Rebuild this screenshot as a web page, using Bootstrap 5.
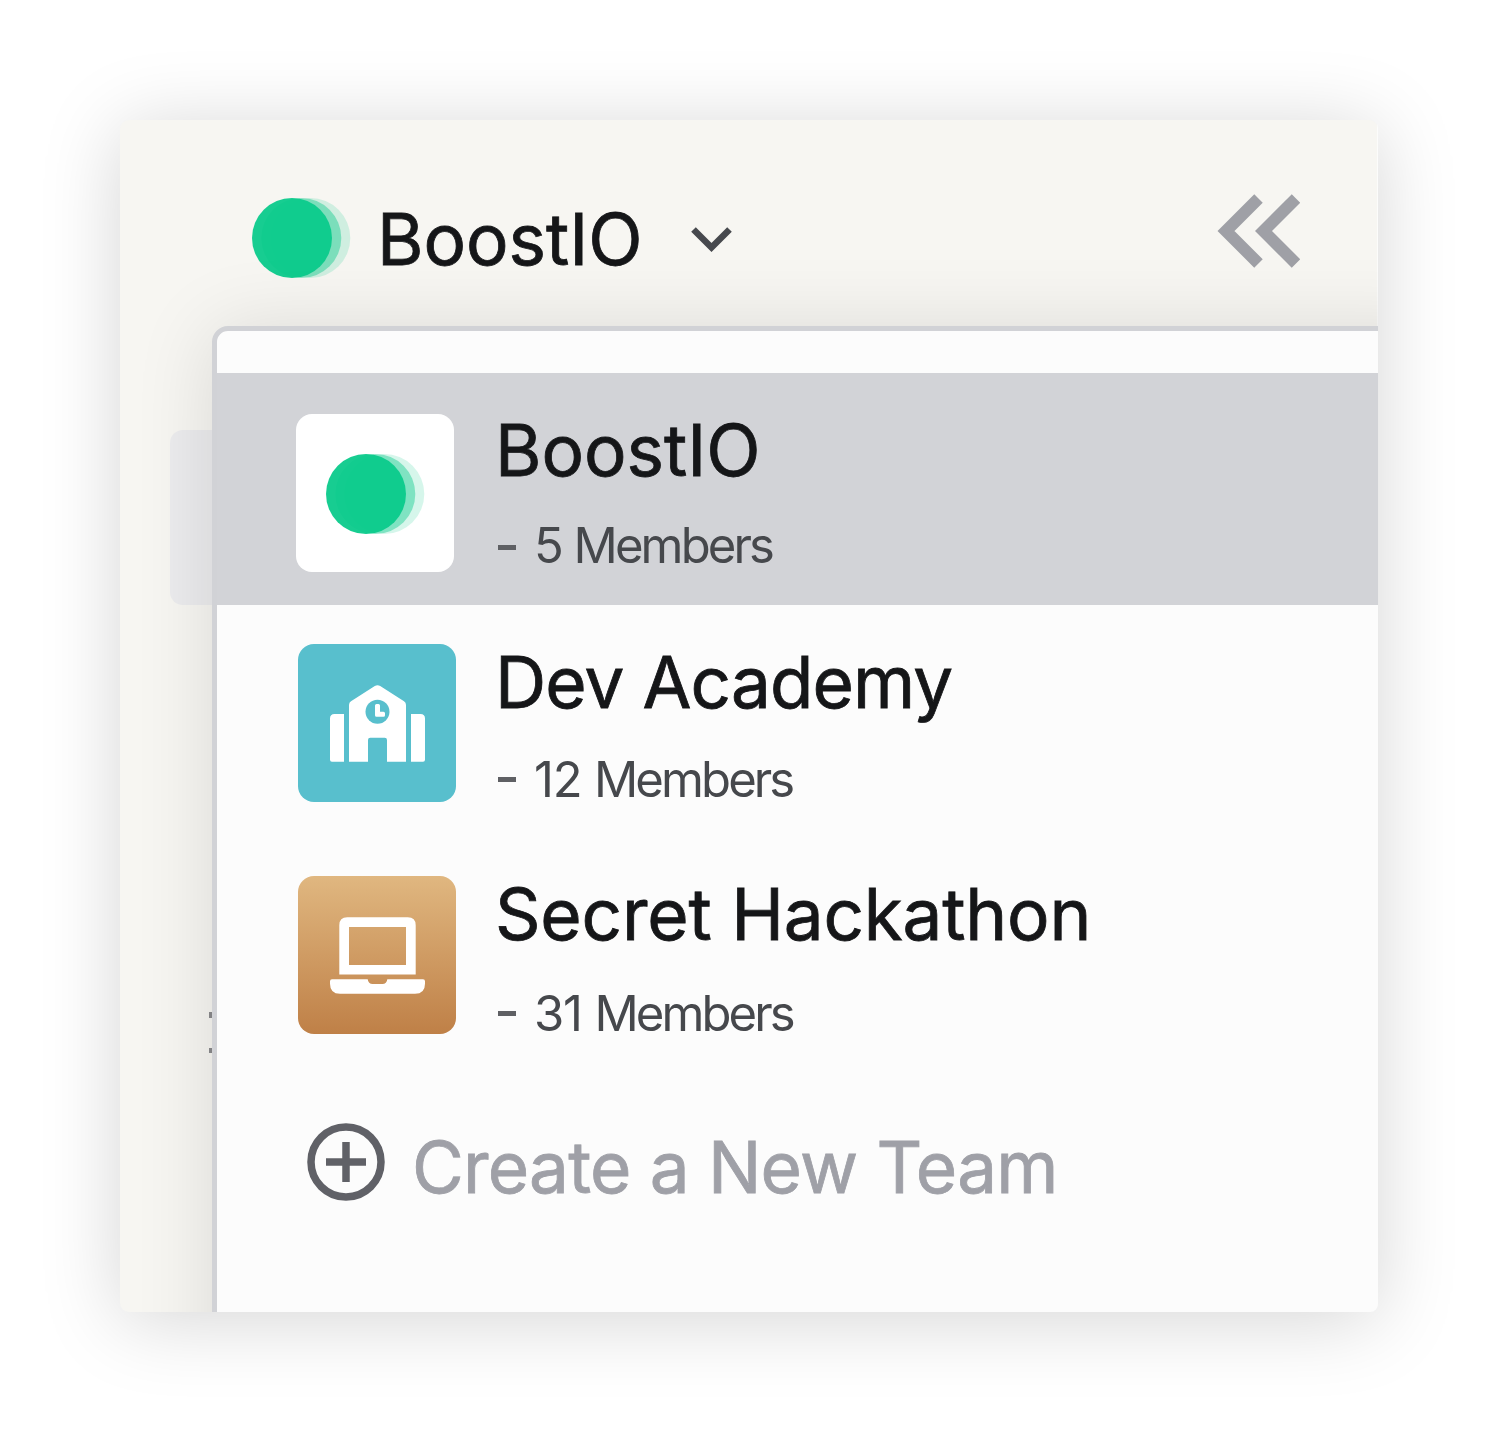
<!DOCTYPE html>
<html lang="en">
<head>
<meta charset="utf-8">
<meta name="viewport" content="width=device-width, initial-scale=1">
<title>BoostIO</title>
<link href="https://cdn.jsdelivr.net/npm/bootstrap@5.3.0/dist/css/bootstrap.min.css" rel="stylesheet">
<style>
body{background:#fff;font-family:Inter,"Liberation Sans",sans-serif;width:1498px;height:1432px;padding:120px}
.app-window{width:1258px;height:1192px;border-radius:9px;background:#f7f6f2;box-shadow:0 8px 80px rgba(0,0,0,.17)}
.app-head{height:206px;padding:74px 77px 0 132px;border-right:1px solid #fcfcfb}
.team-name{font-size:71px;line-height:80px;color:#151618;white-space:nowrap;-webkit-text-stroke:.8px currentColor}
.head-name{margin:5px 0 0 26px}
.caret-icon{margin:32px 0 0 48px}
.team-menu{margin-left:92px;width:1240px;height:1100px;border:5px solid #d1d2d6;border-radius:16px;background:#fcfcfc;padding-top:42px;box-shadow:0 4px 80px rgba(0,0,0,.12)}
.team-item{height:232px;padding:37px 0 0 81px}
.team-item.current{background:#d2d3d7;padding-left:79px}
.tile{width:158px;height:158px;border-radius:16px;margin-top:2px}
.current .tile{margin-top:4px;background:#fff}
.tile.school{background:#58bfcd}
.tile.laptop{background:linear-gradient(#e0b780,#bf8047)}
.team-text{margin-left:35px}
.team-text .team-name{margin-left:4px}
.current .team-text{margin-left:37px}
.second .team-name{letter-spacing:-.9px}
.third .team-name{letter-spacing:-.2px}
.members{font-size:49px;line-height:60px;color:#46484c;white-space:pre;letter-spacing:-1.2px;margin-top:27.500px}
.members b{font-weight:400;letter-spacing:-2.900px}
.current .members{margin-top:25.500px;letter-spacing:-2px}
.third .members{margin-top:29.500px}
.dash{width:18px;height:5px;background:#5f6064;margin:-1px 18px 0 7px}
.current .dash{margin-top:4px}
.create{padding:54px 0 0 90px;height:140px}
.create .team-name{color:#9fa0a7;margin:4px 0 0 27px;letter-spacing:-.8px}
.side-tab{left:50px;top:310px;width:60px;height:175px;border-radius:13px;background:#ececee}
.side-dot{left:89px;width:3px;background:#8b8b8d}
.dot-a{top:892px;height:6px}
.dot-b{top:928px;height:5px}
</style>
</head>
<body>
<main class="app-window">
  <div class="position-relative overflow-hidden h-100 rounded-3">
    <div class="side-tab position-absolute"></div>
    <span class="side-dot dot-a position-absolute"></span>
    <span class="side-dot dot-b position-absolute"></span>
    <header class="app-head d-flex align-items-start position-relative">
      <svg class="mt-1 flex-shrink-0" width="99" height="80" viewBox="0 0 99 80" fill="#0bca8b"><circle cx="58.300" cy="40" r="40" fill-opacity=".17"/><circle cx="49.300" cy="40" r="40" fill-opacity=".43"/><circle cx="40" cy="40" r="40" fill-opacity=".95"/></svg>
      <div class="team-name head-name">BoostIO</div>
      <svg class="caret-icon" width="42" height="28" viewBox="0 0 42 28" fill="none" stroke="#47494e" stroke-width="6.500"><path d="M2.500 3.500 20.500 21.500 38.500 3.500"/></svg>
      <svg class="ms-auto" width="83" height="74" viewBox="0 0 83 74" fill="none" stroke="#9fa0a6" stroke-width="12"><path d="M41.500 4.500 9 37l32.500 32.500M79 4.500 46.500 37 79 69.500"/></svg>
    </header>
    <section class="team-menu position-relative">
      <div class="team-item current d-flex align-items-start">
        <svg class="tile" viewBox="0 0 158 158" fill="#0bca8b"><circle cx="88.300" cy="80" r="40" fill-opacity=".17"/><circle cx="79.300" cy="80" r="40" fill-opacity=".43"/><circle cx="70" cy="80" r="40" fill-opacity=".95"/></svg>
        <div class="team-text"><div class="team-name">BoostIO</div><div class="members d-flex align-items-center"><span class="dash"></span><span>5 <b>Members</b></span></div></div>
      </div>
      <div class="team-item second d-flex align-items-start">
        <svg class="tile school" viewBox="0 0 158 158"><path fill="#fff" d="M36.500 70H46v47.700H34q-2 0-2-2V74.500Q32 70 36.500 70ZM113 70h9.500q4.500 0 4.500 4.500v41.200q0 2-2 2h-12ZM51 117.700V61q0-2.500 2-3.800L76.800 42q2.700-1.500 5.400 0L106 57.200q2 1.300 2 3.800v56.700H89V96q0-2.300-2.300-2.300H72.300Q70 93.700 70 96v21.700Z"/><circle cx="79.500" cy="67.700" r="12" fill="#58bfcd"/><path fill="#fff" d="M78.500 60h2q1.500 0 1.500 1.500v6.200h3.500q1.500 0 1.500 1.500v2q0 1.500-1.500 1.500h-7q-1.500 0-1.500-1.500v-9.700q0-1.500 1.500-1.500Z"/></svg>
        <div class="team-text"><div class="team-name">Dev Academy</div><div class="members d-flex align-items-center"><span class="dash"></span><span>12 <b>Members</b></span></div></div>
      </div>
      <div class="team-item third d-flex align-items-start">
        <svg class="tile laptop" viewBox="0 0 158 158" fill="#fff"><path fill-rule="evenodd" d="M49.300 41.200h60.400q8 0 8 8v49.300H41.300V49.200q0-8 8-8ZM51 51v38h57V51Z"/><path d="M34 103.200h35.700q.5 4.800 5 4.800h9.600q4.500 0 5-4.800H125q2 0 2 2v2.500q0 10-10 10H42q-10 0-10-10v-2.500q0-2 2-2Z"/></svg>
        <div class="team-text"><div class="team-name">Secret Hackathon</div><div class="members d-flex align-items-center"><span class="dash"></span><span>31 <b>Members</b></span></div></div>
      </div>
      <div class="create d-flex align-items-start">
        <svg width="78" height="78" viewBox="0 0 78 78" fill="none" stroke="#606167" stroke-width="7.500"><circle cx="39" cy="39" r="35"/><path d="M19 39h40M39 19v40"/></svg>
        <div class="team-name">Create a New Team</div>
      </div>
    </section>
  </div>
</main>
<script src="https://cdn.jsdelivr.net/npm/bootstrap@5.3.0/dist/js/bootstrap.bundle.min.js"></script>
</body>
</html>
